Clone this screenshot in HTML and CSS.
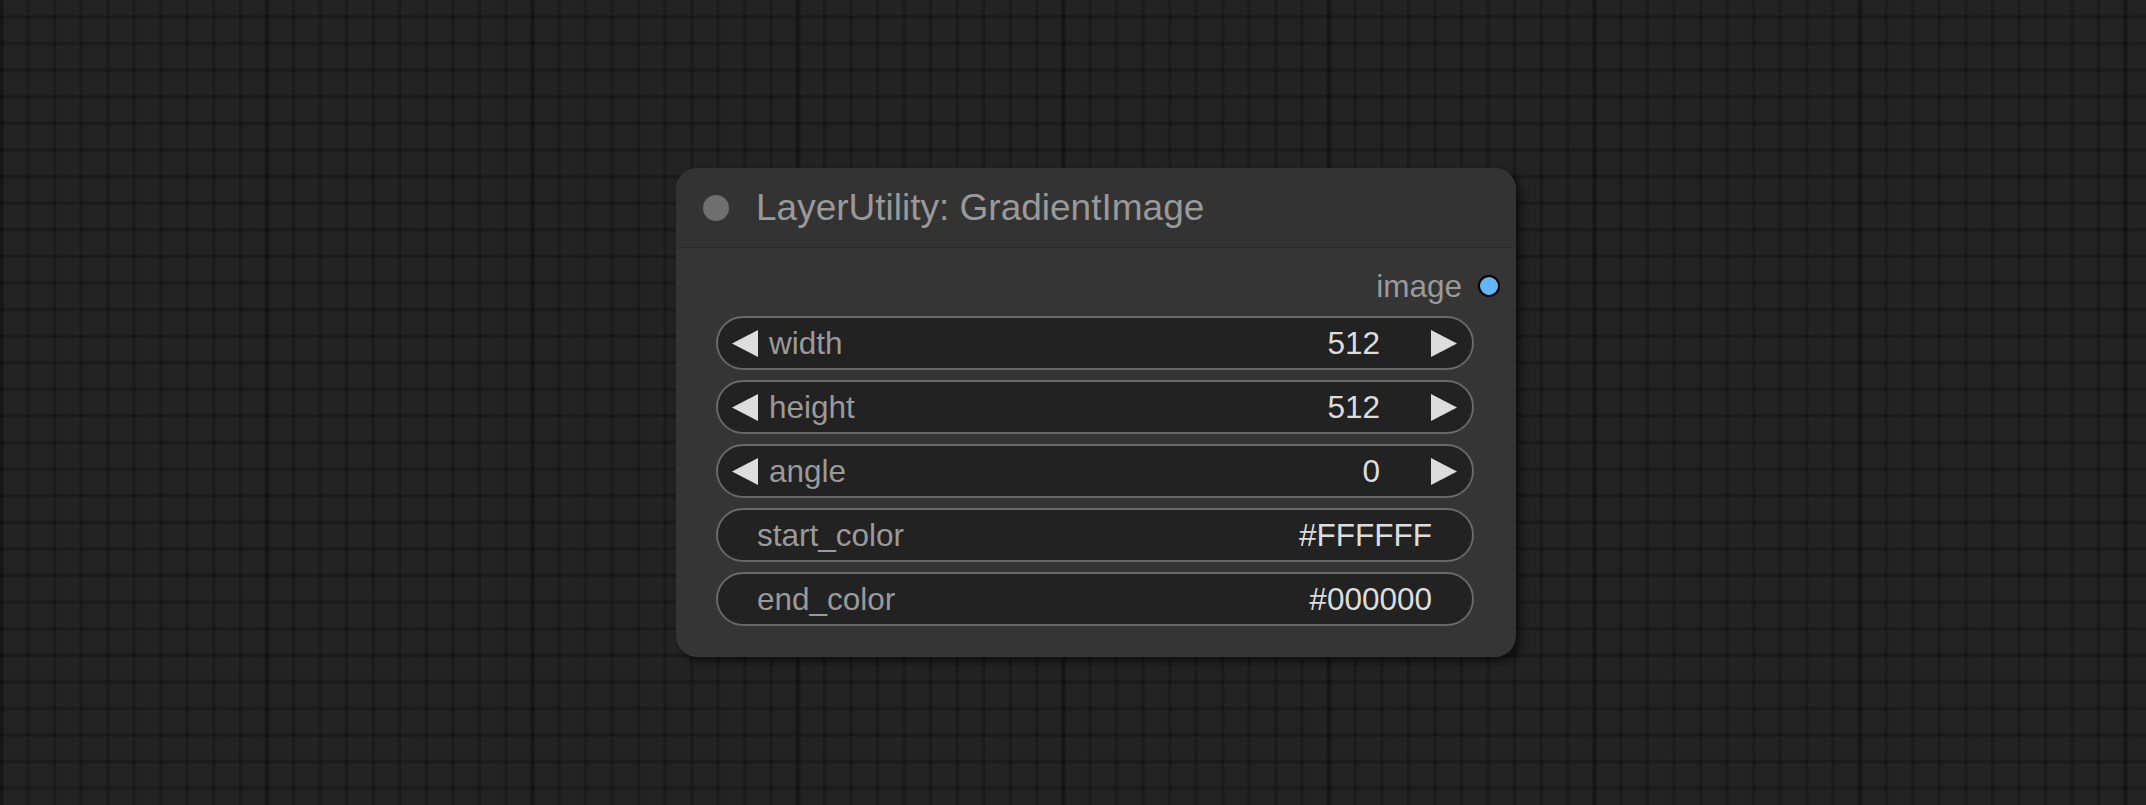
FILE: index.html
```html
<!DOCTYPE html>
<html>
<head>
<meta charset="utf-8">
<link rel="stylesheet" href="styles.css">
</head>
<body>
<div class="canvas">
  <div class="node">
    <div class="title">
      <span class="title-dot"></span>
      <span class="title-text">LayerUtility: GradientImage</span>
    </div>
    <div class="body">
      <div class="output-row">
        <span class="slot-label">image</span>
        <span class="slot-dot"></span>
      </div>
      <div class="widgets">
        <div class="widget number">
          <svg class="arrow" width="26" height="27" viewBox="0 0 26 27"><polygon points="26,0 26,27 0,13.5"/></svg>
          <span class="label">width</span>
          <span class="value">512</span>
          <svg class="arrow" width="26" height="27" viewBox="0 0 26 27"><polygon points="0,0 0,27 26,13.5"/></svg>
        </div>
        <div class="widget number">
          <svg class="arrow" width="26" height="27" viewBox="0 0 26 27"><polygon points="26,0 26,27 0,13.5"/></svg>
          <span class="label">height</span>
          <span class="value">512</span>
          <svg class="arrow" width="26" height="27" viewBox="0 0 26 27"><polygon points="0,0 0,27 26,13.5"/></svg>
        </div>
        <div class="widget number">
          <svg class="arrow" width="26" height="27" viewBox="0 0 26 27"><polygon points="26,0 26,27 0,13.5"/></svg>
          <span class="label">angle</span>
          <span class="value">0</span>
          <svg class="arrow" width="26" height="27" viewBox="0 0 26 27"><polygon points="0,0 0,27 26,13.5"/></svg>
        </div>
        <div class="widget text">
          <span class="label">start_color</span>
          <span class="value">#FFFFFF</span>
        </div>
        <div class="widget text">
          <span class="label">end_color</span>
          <span class="value">#000000</span>
        </div>
      </div>
    </div>
  </div>
</div>
</body>
</html>
```

FILE: styles.css
```css
html, body {
  margin: 0;
  padding: 0;
  width: 2146px;
  height: 805px;
  overflow: hidden;
}

body {
  font-family: "Liberation Sans", Arial, sans-serif;
  background-color: #232323;
  background-image:
    linear-gradient(90deg, transparent 0, rgba(0,0,0,0.12) 1.5px, rgba(0,0,0,0.22) 3.5px, rgba(0,0,0,0.12) 5.5px, transparent 7px),
    linear-gradient(90deg, transparent 0, rgba(0,0,0,0.16) 1px, rgba(0,0,0,0.24) 2.5px, rgba(0,0,0,0.16) 4px, transparent 5px),
    linear-gradient(180deg, transparent 0, rgba(0,0,0,0.16) 1px, rgba(0,0,0,0.24) 2.5px, rgba(0,0,0,0.16) 4px, transparent 5px);
  background-size: 265.5px 100%, 26.55px 100%, 100% 26.6px;
  background-position: 263.5px 0, -1px 0, 0 14.5px;
}

.canvas {
  position: relative;
  width: 2146px;
  height: 805px;
}

.node {
  position: absolute;
  left: 676px;
  top: 168px;
  width: 840px;
  height: 489px;
  box-sizing: border-box;
  background: #353535;
  border-radius: 21px;
  box-shadow: 5px 5px 9px rgba(0,0,0,0.55);
  display: flex;
  flex-direction: column;
}

.title {
  height: 80px;
  flex: 0 0 80px;
  box-sizing: border-box;
  display: flex;
  align-items: center;
  background: #333333;
  border-radius: 21px 21px 0 0;
  border-bottom: 1px solid #2d2d2d;
}

.title-dot {
  width: 26px;
  height: 26px;
  border-radius: 50%;
  background: #6f6f6f;
  margin-left: 27px;
  flex: 0 0 26px;
}

.title-text {
  margin-left: 27px;
  font-size: 37px;
  line-height: 80px;
  color: #999999;
  white-space: nowrap;
}

.body {
  padding: 13px 0 0 0;
}

.output-row {
  height: 50px;
  display: flex;
  align-items: center;
  justify-content: flex-end;
  padding-right: 16px;
}

.slot-label {
  font-size: 31.5px;
  color: #9a9a9a;
  line-height: 50px;
  margin-right: 16px;
}

.slot-dot {
  width: 18px;
  height: 18px;
  border-radius: 50%;
  background: #64b5f6;
  border: 2px solid #000;
  flex: 0 0 auto;
}

.widgets {
  margin-top: 5px;
  padding: 0 42px 0 40px;
  display: flex;
  flex-direction: column;
  gap: 10px;
}

.widget {
  height: 54px;
  box-sizing: border-box;
  border: 2px solid #686868;
  border-radius: 27px;
  background: #222222;
  display: flex;
  align-items: center;
  font-size: 31.5px;
  line-height: 50px;
  white-space: nowrap;
}

.widget .label {
  color: #9a9a9a;
  flex: 1 1 auto;
}

.widget .value {
  color: #dddddd;
}

.arrow {
  fill: #dddddd;
  flex: 0 0 26px;
  display: block;
}

.number {
  padding: 0 15px 0 14px;
}

.number .label {
  margin-left: 11px;
}

.number .value {
  margin-right: 51px;
}

.text {
  padding: 0 40px 0 39px;
}
```
